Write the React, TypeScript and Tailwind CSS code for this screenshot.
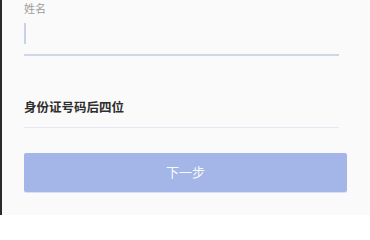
export default function App() {
  return (
    <div
      className="flex h-[215px] w-[370px] overflow-hidden bg-[#fafafa]"
      style={{ fontFamily: '"Noto Sans CJK SC", "Noto Sans", sans-serif' }}
    >
      <div className="w-[2px] shrink-0 bg-[#2a2a2a]" />
      <div className="flex flex-1 flex-col pl-[22px]">
        <div className="pr-[31px]">
          <p className="h-[16px] text-[11px] leading-[16px] text-[#9c9c9c]">姓名</p>
          <div className="h-[38px] pt-[7px]">
            <div className="h-[21px] w-[2px] bg-[#c9d0ea]" />
          </div>
          <div className="h-[1.5px] bg-[#cfd6e6]" />
          <p className="mt-[41px] h-[20px] text-[12.5px] font-bold leading-[20px] text-[#2e2e2e]">
            身份证号码后四位
          </p>
          <div className="mt-[10px] h-[1px] bg-[#e6e7f2]" />
        </div>
        <div className="mt-[25px] pr-[23px]">
          <button className="flex h-[39px] w-full items-center justify-center rounded-[2px] bg-[#a4b6e8] text-[13px] text-white/95 shadow-[0_1px_0_#d9e0f4]">
            下一步
          </button>
        </div>
      </div>
    </div>
  )
}
